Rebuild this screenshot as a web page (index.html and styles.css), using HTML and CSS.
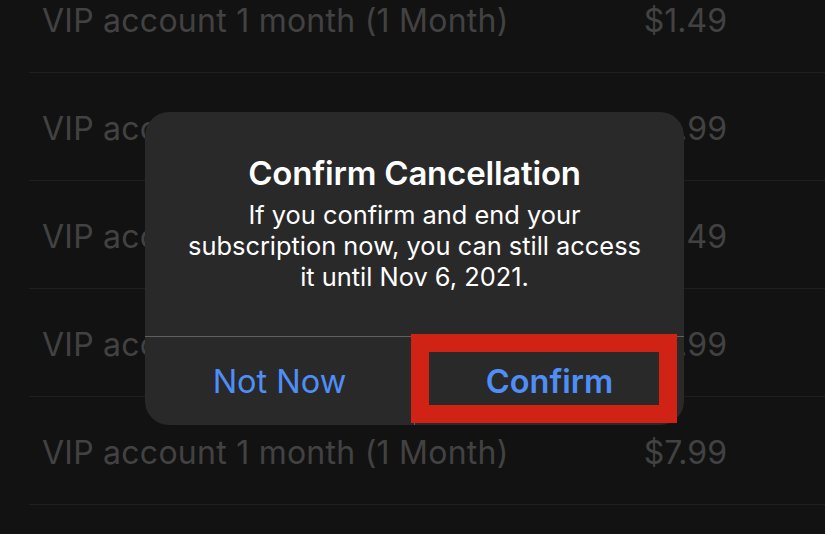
FILE: index.html
```html
<!DOCTYPE html>
<html>
<head>
<meta charset="utf-8">
<link rel="stylesheet" href="styles.css">
</head>
<body>
<div class="screen">
  <ul class="list">
    <li class="row"><span class="name">VIP account 1 month (1 Month)</span><span class="price">$1.49</span></li>
    <li class="row"><span class="name">VIP account 1 month (1 Month)</span><span class="price">$2.99</span></li>
    <li class="row"><span class="name">VIP account 1 month (1 Month)</span><span class="price">$3.49</span></li>
    <li class="row"><span class="name">VIP account 1 month (1 Month)</span><span class="price">$4.99</span></li>
    <li class="row"><span class="name">VIP account 1 month (1 Month)</span><span class="price">$7.99</span></li>
  </ul>
  <div class="alert">
    <div class="alert-body">
      <h1 class="alert-title">Confirm Cancellation</h1>
      <p class="alert-msg">If you confirm and end your<br>subscription now, you can still access<br>it until Nov 6, 2021.</p>
    </div>
    <div class="alert-actions">
      <button class="action">Not Now</button>
      <button class="action primary">Confirm</button>
    </div>
  </div>
  <div class="highlight"></div>
</div>
</body>
</html>
```
FILE: styles.css
```css
* { box-sizing: border-box; }
html, body {
  margin: 0;
  padding: 0;
  background: #121212;
  width: 825px;
  height: 534px;
  overflow: hidden;
  font-family: Inter, "Noto Sans", "Liberation Sans", sans-serif;
}
.screen {
  position: relative;
  width: 825px;
  height: 534px;
  overflow: hidden;
}
.list {
  list-style: none;
  margin: -35px 0 0 29px;
  padding: 0;
}
.row {
  height: 108px;
  border-bottom: 1px solid #1f1f1f;
  display: flex;
  align-items: center;
  justify-content: space-between;
  padding: 3px 98px 0 13px;
  color: #424242;
  font-size: 32px;
  font-weight: 400;
  letter-spacing: 0.25px;
}
.price {
  letter-spacing: 0;
}
.alert {
  position: absolute;
  left: 145px;
  top: 112px;
  width: 539px;
  height: 313px;
  background: #292929;
  border-radius: 24px;
  display: flex;
  flex-direction: column;
  overflow: hidden;
}
.alert-body {
  flex: 1;
  display: flex;
  flex-direction: column;
  align-items: center;
  padding: 41px 20px 0;
  text-align: center;
  color: #fff;
}
.alert-title {
  margin: 0;
  font-size: 33px;
  font-weight: 600;
  line-height: 40px;
  letter-spacing: -0.2px;
}
.alert-msg {
  margin: 6px 0 0;
  font-size: 25.4px;
  font-weight: 400;
  line-height: 31px;
  white-space: nowrap;
}
.alert-actions {
  height: 89px;
  border-top: 1px solid #606060;
  display: flex;
}
.action {
  flex: 1;
  background: none;
  border: 0;
  margin: 0;
  padding: 0;
  font-family: inherit;
  font-size: 32.5px;
  color: #4f8ef7;
  font-weight: 400;
}
.action + .action {
  border-left: 1px solid #606060;
}
.action.primary {
  font-weight: 600;
}
.highlight {
  position: absolute;
  left: 411px;
  top: 334px;
  width: 266px;
  height: 89px;
  border: 18px solid #d02316;
}
```
